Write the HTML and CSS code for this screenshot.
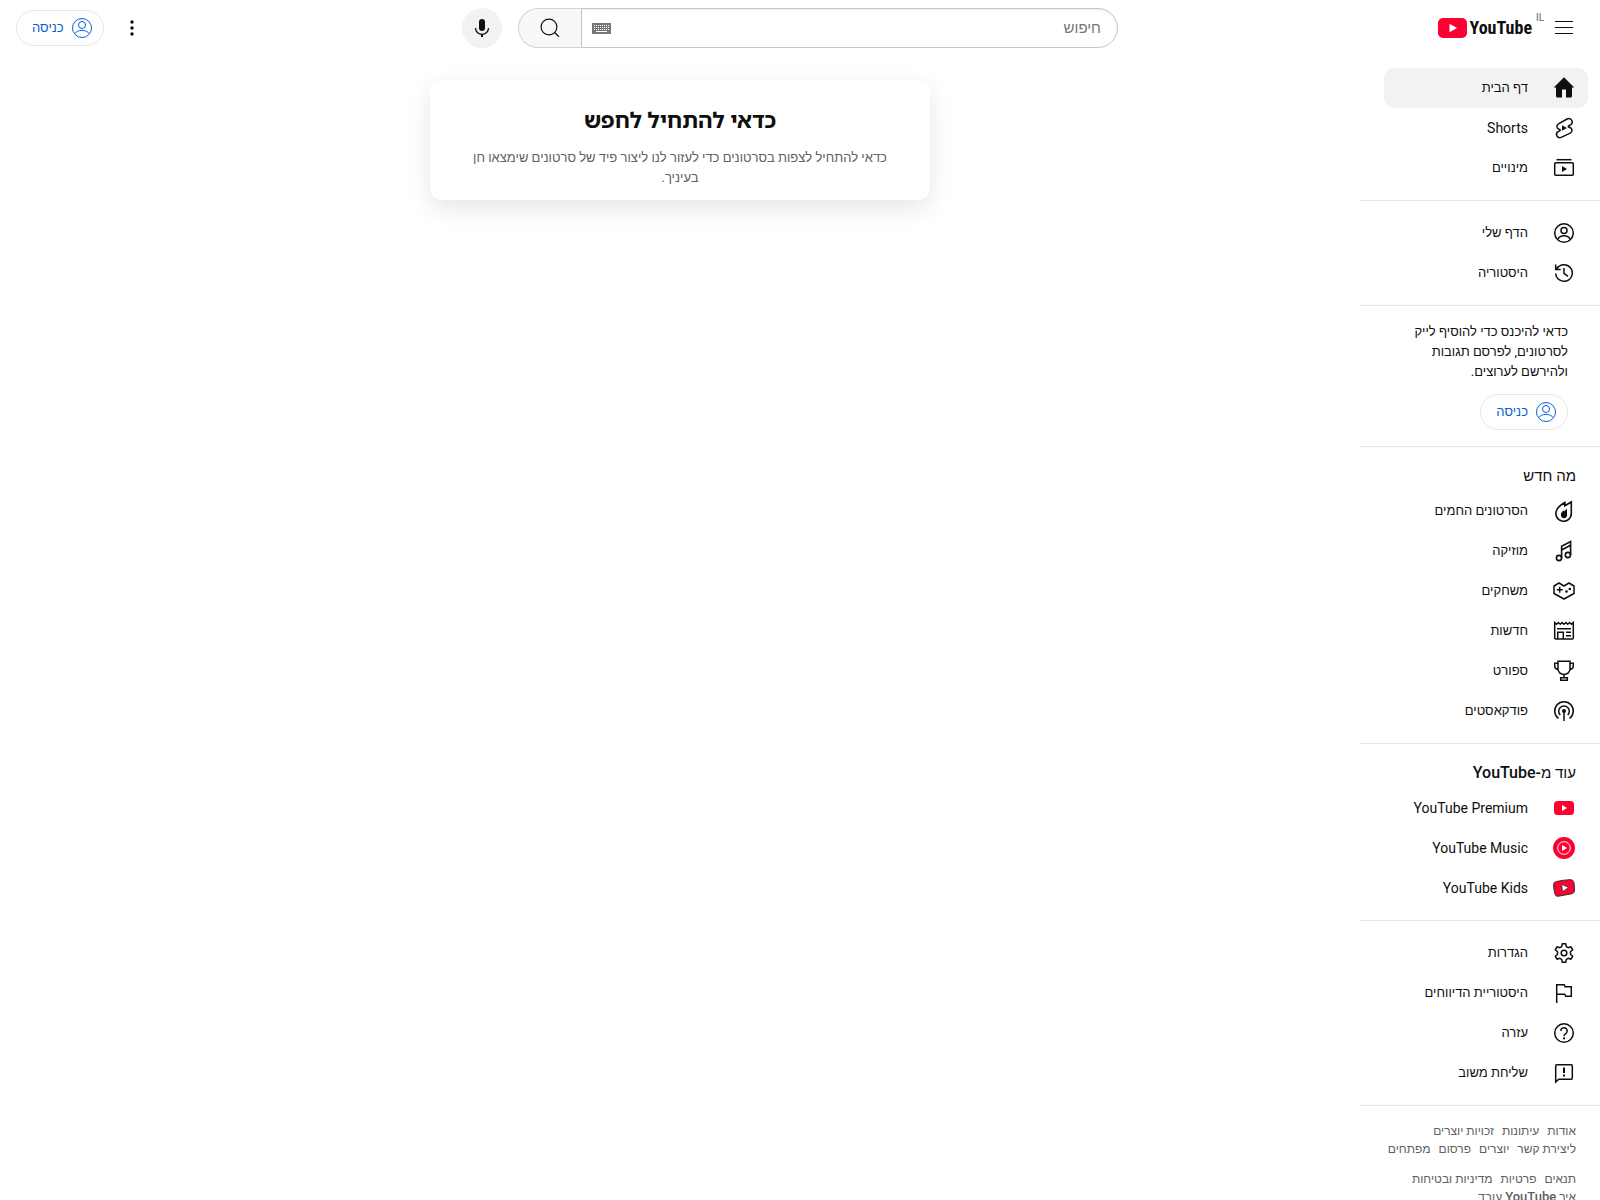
FILE: index.html
```html
<!DOCTYPE html>
<html lang="he" dir="rtl">
<head>
  <meta charset="UTF-8" />
  <meta name="viewport" content="width=device-width, initial-scale=1" />
  <title>YouTube</title>
  <link rel="stylesheet" href="styles.css">
</head>
<body>
  <!-- shared by the two sign-in buttons -->
  <svg class="defs" width="0" height="0" aria-hidden="true">
    <symbol id="avatar" viewBox="0 0 24 24">
      <g fill="none" stroke="currentColor">
        <circle cx="12" cy="12" r="9.500"/>
        <circle cx="12" cy="9" r="3.500"/>
        <path d="M4.500 17.800c1.600-2.300 4.300-3.400 7.500-3.400s5.900 1.100 7.500 3.400"/>
      </g>
    </symbol>
  </svg>

  <header class="masthead">
    <div class="start">
      <button class="icon-btn" aria-label="מדריך">
        <svg class="icon" viewBox="0 0 24 24"><path d="M3 5.500h18M3 11.500h18M3 17.500h18" fill="none" stroke="currentColor"/></svg>
      </button>
      <a class="logo" href="/" dir="ltr">
        <svg class="logo-mark" viewBox="0 0 29 20"><rect width="29" height="20" rx="5" fill="#ff0033"/><path d="M11.500 5.700v8.600L19 10z" fill="#fff"/></svg>
        <span class="logo-text">YouTube</span>
        <span class="country">IL</span>
      </a>
    </div>

    <div class="center">
      <form class="search" role="search">
        <div class="search-box">
          <input type="text" class="search-input" placeholder="חיפוש" aria-label="חיפוש">
          <svg class="keyboard" viewBox="0 0 19 11"><path fill="#777" d="M0 0h19v11H0z"/><path d="M2 2.500h15M2 4.500h15M2 6.500h15" stroke="#fff" stroke-dasharray="1 1"/><path d="M4 8.500h11" stroke="#fff"/></svg>
        </div>
        <button type="button" class="search-btn" aria-label="חיפוש">
          <svg class="icon" viewBox="0 0 24 24"><g fill="none" stroke="currentColor" stroke-width="1.200"><circle cx="11" cy="11" r="7.900"/><path d="M16.500 16.500l4.500 4.300"/></g></svg>
        </button>
      </form>
      <button class="icon-btn mic" aria-label="חיפוש קולי">
        <svg class="icon" viewBox="0 0 24 24"><rect x="9" y="3" width="6" height="12" rx="3" fill="currentColor"/><path d="M5.500 12c0 3.600 2.800 6.300 6.500 6.300s6.500-2.700 6.500-6.300" fill="none" stroke="currentColor" stroke-width="1.300"/><path d="M12 18v3" stroke="currentColor" stroke-width="2"/></svg>
      </button>
    </div>

    <div class="end">
      <button class="icon-btn" aria-label="הגדרות">
        <svg class="icon" viewBox="0 0 24 24" fill="currentColor"><circle cx="12" cy="6" r="1.700"/><circle cx="12" cy="12" r="1.700"/><circle cx="12" cy="18" r="1.700"/></svg>
      </button>
      <a class="signin" href="#signin"><svg class="icon"><use href="#avatar"/></svg>כניסה</a>
    </div>
  </header>

  <div class="page">
    <nav class="guide">
      <div class="section">
        <a class="item active" href="/">
          <svg class="icon" viewBox="0 0 24 24"><path fill="currentColor" d="M12 1.200L22.300 11.500H20V20a1.500 1.500 0 0 1-1.500 1.500H14v-8h-4v8H5.500A1.500 1.500 0 0 1 4 20v-8.500H1.700z"/></svg>
          דף הבית</a>
        <a class="item latin" href="#shorts">
          <svg class="icon" viewBox="0 0 24 24"><path fill="none" stroke="currentColor" stroke-width="1.500" d="M6.800 7.700l8.300-4.700c1.700-.9 3.700-.3 4.600 1.300.9 1.700.3 3.700-1.300 4.600l-2 1.100v.9l1.500.6c2.600 1.100 2.800 4.400.3 5.700L9.200 21.300c-1.700.9-3.500.2-4.300-1.400-.8-1.600-.2-3.300 1.200-4.200l2-1.100v-.8l-1.300-.7C4.200 12 4.300 9 6.800 7.700z"/><path fill="currentColor" d="M10 9.300v5.400l5-2.700z"/></svg>
          Shorts</a>
        <a class="item" href="#subscriptions">
          <svg class="icon" viewBox="0 0 24 24"><g fill="none" stroke="currentColor" stroke-width="1.500"><path d="M4.500 3.700h15"/><rect x="2.700" y="6.700" width="18.600" height="12.600" rx="1"/></g><path fill="currentColor" d="M10 10v6l5-3z"/></svg>
          מינויים</a>
      </div>

      <div class="section">
        <a class="item" href="#you">
          <svg class="icon" viewBox="0 0 24 24"><g fill="none" stroke="currentColor" stroke-width="1.500"><circle cx="12" cy="12" r="9.300"/><circle cx="12" cy="9.500" r="3"/><path d="M5.700 18.500c1.300-2.400 3.500-3.700 6.300-3.700s5 1.300 6.300 3.700"/></g></svg>
          הדף שלי</a>
        <a class="item" href="#history">
          <svg class="icon" viewBox="0 0 24 24"><g fill="none" stroke="currentColor" stroke-width="1.500"><path d="M3.700 12.500a8.300 8.300 0 1 0 1.300-5"/><path d="M3.700 3.500v5h5"/><path d="M4.500 7.800l2-2.300"/><path d="M12 7v5.300l4 3"/></g></svg>
          היסטוריה</a>
      </div>

      <div class="section promo">
        <p>כדאי להיכנס כדי להוסיף לייק לסרטונים, לפרסם תגובות ולהירשם לערוצים.</p>
        <a class="signin" href="#signin"><svg class="icon"><use href="#avatar"/></svg>כניסה</a>
      </div>

      <div class="section">
        <h3>מה חדש</h3>
        <a class="item" href="#trending">
          <svg class="icon" viewBox="0 0 24 24"><path fill="none" stroke="currentColor" stroke-width="1.600" d="M19.300 3v11.500a7.700 7.700 0 1 1-14.500-3.600C6 8 8.700 6 12.800 3.500v3.300z"/><path fill="currentColor" d="M15 9.500v5.800a3.100 3.100 0 1 1-6 0c0-2 1.400-2.900 3.200-4.100v1.200z"/></svg>
          הסרטונים החמים</a>
        <a class="item" href="#music">
          <svg class="icon" viewBox="0 0 24 24"><g fill="none" stroke="currentColor" stroke-width="1.600"><circle cx="7" cy="19" r="2.600"/><circle cx="15.900" cy="16" r="2.600"/><path d="M9.600 19V7.300l9-4.800V16M9.600 11l9-4.800"/></g></svg>
          מוזיקה</a>
        <a class="item" href="#gaming">
          <svg class="icon" viewBox="0 0 24 24"><path fill="none" stroke="currentColor" stroke-width="1.500" stroke-linejoin="round" d="M2 7l5-3 5 3 5-3 5 3v7.500l-10 5.500-10-5.500z"/><path stroke="currentColor" stroke-width="1.500" d="M4.700 10.800h6M7.700 7.800v6"/><circle cx="14.500" cy="12.500" r="1.300" fill="currentColor"/><circle cx="17.800" cy="10" r="1.300" fill="currentColor"/></svg>
          משחקים</a>
        <a class="item" href="#news">
          <svg class="icon" viewBox="0 0 24 24"><g fill="none" stroke="currentColor" stroke-width="1.500"><path d="M2.700 3.500l1.900 1.700 1.800-1.700 1.900 1.700 1.800-1.700L12 5.200l1.900-1.700 1.800 1.700 1.900-1.700 1.800 1.700 1.900-1.700V19a1 1 0 0 1-1 1H3.700a1 1 0 0 1-1-1z"/><path d="M5 9.700h14M5.700 20v-6.800h5.600V20M14 13.200h5M14 16.800h5" /></g></svg>
          חדשות</a>
        <a class="item" href="#sports">
          <svg class="icon" viewBox="0 0 24 24"><path fill="none" stroke="currentColor" stroke-width="1.500" d="M6 2.200h12V10c0 3-2.600 5.500-6 5.500S6 13 6 10zM6 4.200H2.700V7c0 2 1.500 3.300 3.500 3.800M18 4.200h3.300V7c0 2-1.500 3.300-3.500 3.800M12 15.500v3M8.700 18.700h6.600v2.600H8.700z"/></svg>
          ספורט</a>
        <a class="item" href="#podcasts">
          <svg class="icon" viewBox="0 0 24 24"><g fill="none" stroke="currentColor" stroke-width="1.500"><path d="M6.500 19.500a9.300 9.300 0 1 1 11 0M8.300 16a5.300 5.300 0 1 1 7.400 0"/><path d="M12 12v10"/></g><circle cx="12" cy="12" r="2" fill="currentColor"/></svg>
          פודקאסטים</a>
      </div>

      <div class="section">
        <h3>עוד מ<span class="latin">-YouTube</span></h3>
        <a class="item latin" href="#premium">
          <svg class="icon" viewBox="0 0 24 24"><rect x="2" y="5" width="20" height="14" rx="3.500" fill="#ff0033"/><path fill="#fff" d="M10 9v6l5-3z"/></svg>
          YouTube Premium</a>
        <a class="item latin" href="#ytmusic">
          <svg class="icon" viewBox="0 0 24 24"><circle cx="12" cy="12" r="11" fill="#ff0033"/><circle cx="12" cy="12" r="6.300" fill="none" stroke="#fff"/><path fill="#fff" d="M10 9v6l5-3z"/></svg>
          YouTube Music</a>
        <a class="item latin" href="#kids">
          <svg class="icon" viewBox="0 0 24 24"><path fill="#ff0033" stroke="#303030" stroke-linejoin="round" d="M4.500 5.500c4-.9 9-1.600 13.500-1.800 2.300-.1 3.600.9 4 3.100.4 2.600.6 5.300.4 8-.1 1.800-1 2.700-2.800 3-4.600.9-8.500 1.500-13 2.400-2 .4-3.200-.4-3.700-2.400-.8-3-1.300-6-1.300-9 0-1.900 1-2.900 2.900-3.300z"/><path fill="#fff" stroke="#303030" stroke-width=".8" d="M9.700 8.300l.8 7.400 6-4.200z"/></svg>
          YouTube Kids</a>
      </div>

      <div class="section">
        <a class="item" href="#settings">
          <svg class="icon" viewBox="0 0 24 24"><g fill="none" stroke="currentColor" stroke-width="1.500" stroke-linejoin="round"><path d="M10.300 2.700h3.400l.6 2.900 1.900 1.100 2.800-.9 1.700 3-2.200 2v2.400l2.200 2-1.700 3-2.800-.9-1.900 1.100-.6 2.900h-3.400l-.6-2.900-1.900-1.100-2.800.9-1.700-3 2.200-2v-2.400l-2.200-2 1.700-3 2.800.9 1.900-1.100z"/><circle cx="12" cy="12" r="2.800"/></g></svg>
          הגדרות</a>
        <a class="item" href="#reports">
          <svg class="icon" viewBox="0 0 24 24"><path fill="none" stroke="currentColor" stroke-width="1.500" d="M4.700 22V3.700h7.500l.9 2h6.200v9.600h-5.600l-.9-2H4.700"/></svg>
          היסטוריית הדיווחים</a>
        <a class="item" href="#help">
          <svg class="icon" viewBox="0 0 24 24"><g fill="none" stroke="currentColor" stroke-width="1.500"><circle cx="12" cy="12" r="9.300"/><path d="M8.800 10a3.200 3.200 0 1 1 5.300 2.300c-1.100.9-2.100 1.200-2.100 2.900"/></g><circle cx="12" cy="17.400" r="1.100" fill="currentColor"/></svg>
          עזרה</a>
        <a class="item" href="#feedback">
          <svg class="icon" viewBox="0 0 24 24"><path fill="none" stroke="currentColor" stroke-width="1.500" d="M3.700 21V4.700a1 1 0 0 1 1-1h14.600a1 1 0 0 1 1 1v12.600a1 1 0 0 1-1 1H6.700z"/><path stroke="currentColor" stroke-width="2" d="M12 6.500V12M12 13.500v2"/></svg>
          שליחת משוב</a>
      </div>

      <footer class="links">
        <div>
          <a href="#about">אודות</a>
          <a href="#press">עיתונות</a>
          <a href="#copyright">זכויות יוצרים</a>
          <a href="#contact">ליצירת קשר</a>
          <a href="#creators">יוצרים</a>
          <a href="#ads">פרסום</a>
          <a href="#developers">מפתחים</a>
        </div>
        <div>
          <a href="#terms">תנאים</a>
          <a href="#privacy">פרטיות</a>
          <a href="#policy">מדיניות ובטיחות</a>
          <a href="#how">איך <span class="latin">YouTube</span> עובד</a>
        </div>
      </footer>
    </nav>

    <main class="content">
      <div class="card">
        <h1>כדאי להתחיל לחפש</h1>
        <p>כדאי להתחיל לצפות בסרטונים כדי לעזור לנו ליצור פיד של סרטונים שימצאו חן בעיניך.</p>
      </div>
    </main>
  </div>
</body>
</html>
```

FILE: styles.css
```css
* {
  box-sizing: border-box;
}
body {
  margin: 0;
  height: 100vh;
  display: flex;
  flex-direction: column;
  overflow: hidden;
  background: #fff;
  color: #0f0f0f;
  font-family: Roboto, "Liberation Sans", Arial, sans-serif;
  font-size: 13px;
  line-height: 20px;
}
a {
  color: inherit;
  text-decoration: none;
}
button,
input {
  font-family: inherit;
  color: inherit;
}
.defs {
  position: absolute;
}
.icon {
  display: block;
  flex: none;
  width: 24px;
  height: 24px;
}

/* top bar */
.masthead {
  display: flex;
  flex: none;
  align-items: center;
  justify-content: space-between;
  height: 56px;
  padding: 0 16px;
}
.start {
  display: flex;
  align-items: center;
  gap: 12px;
  width: 169px;
}
.icon-btn {
  display: flex;
  flex: none;
  align-items: center;
  justify-content: center;
  width: 40px;
  height: 40px;
  padding: 0;
  border: 0;
  border-radius: 50%;
  background: none;
}
.logo {
  position: relative;
  display: flex;
  align-items: center;
  gap: 2px;
}
.logo-mark {
  width: 29px;
  height: 20px;
}
.logo-text {
  font-family: "Roboto Condensed", "Liberation Sans Narrow", Roboto, sans-serif;
  font-size: 18px;
  font-weight: 700;
}
.country {
  position: absolute;
  top: -6px;
  left: 100%;
  margin-left: 4px;
  color: #606060;
  font-size: 10px;
  line-height: 12px;
}
.center {
  display: flex;
  flex: 0 1 732px;
  align-items: center;
  gap: 16px;
  padding-inline-start: 76px;
}
.search {
  display: flex;
  flex: 1;
  height: 40px;
}
.search-box {
  display: flex;
  flex: 1;
  align-items: center;
  padding: 0 16px 0 10px;
  border: 1px solid #c6c6c6;
  border-radius: 0 20px 20px 0;
  box-shadow: inset 0 1px 2px #eee;
}
.search-input {
  flex: 1;
  min-width: 0;
  padding: 0;
  border: 0;
  outline: 0;
  background: none;
  font-size: 15px;
  line-height: 24px;
}
.search-input::placeholder {
  color: #757575;
}
.keyboard {
  width: 19px;
  height: 11px;
}
.search-btn {
  display: flex;
  align-items: center;
  justify-content: center;
  width: 63px;
  padding: 0;
  border: 1px solid #d3d3d3;
  border-right: 0;
  border-radius: 20px 0 0 20px;
  background: #f8f8f8;
}
.mic {
  background: #f2f2f2;
}
.end {
  display: flex;
  align-items: center;
  justify-content: flex-end;
  gap: 8px;
  width: 225px;
}
.signin {
  display: inline-flex;
  align-items: center;
  gap: 6px;
  height: 36px;
  padding: 0 9px 0 15px;
  border: 1px solid #e5e5e5;
  border-radius: 18px;
  color: #065fd4;
  font-weight: 500;
}

/* side menu */
.page {
  display: flex;
  flex: 1;
  min-height: 0;
}
.guide {
  flex: none;
  width: 240px;
  overflow: hidden;
}
.section {
  padding: 12px;
  border-bottom: 1px solid #e5e5e5;
}
.item {
  display: flex;
  align-items: center;
  gap: 24px;
  width: 204px;
  height: 40px;
  padding: 0 12px;
  border-radius: 10px;
}
.item.latin {
  font-size: 14px;
}
.active {
  background: #f2f2f2;
}
.section h3 {
  margin: 0;
  padding: 6px 12px 4px;
  font-size: 15px;
  font-weight: 400;
  line-height: 22px;
}
h3 .latin {
  font-size: 16px;
  font-weight: 500;
}
.promo {
  padding: 16px 32px;
}
.promo p {
  margin: 0 0 12px;
}
.promo .signin {
  display: flex;
  width: fit-content;
}
.links {
  padding: 16px 24px 0;
  color: #606060;
  font-size: 12px;
  line-height: 18px;
}
.links div {
  display: flex;
  flex-wrap: wrap;
  column-gap: 8px;
  margin-bottom: 12px;
}
.links .latin {
  font-size: 13px;
  font-weight: 500;
}

/* feed */
.content {
  flex: 1;
  padding: 24px;
}
.card {
  max-width: 500px;
  margin: 0 auto;
  padding: 24px 32px 12px;
  border-radius: 12px;
  box-shadow: 0 8px 24px rgba(0, 0, 0, 0.1);
  text-align: center;
}
.card h1 {
  margin: 0;
  padding: 1px 0 11px;
  font-family: Roboto, "Noto Sans Hebrew", "Liberation Sans", sans-serif;
  font-size: 22px;
  line-height: 32px;
}
.card p {
  margin: 0;
  color: #606060;
}
```
